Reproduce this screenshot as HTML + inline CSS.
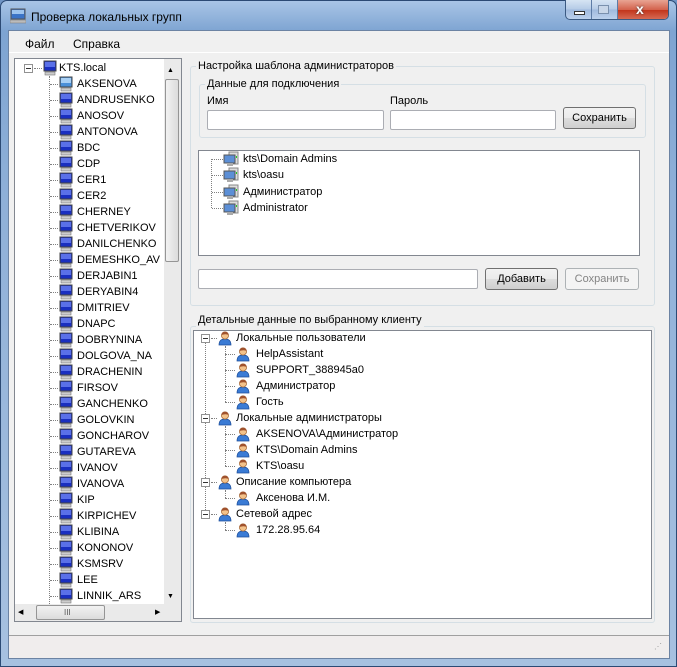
<!DOCTYPE html>
<html><head><meta charset="utf-8">
<style>
*{margin:0;padding:0;box-sizing:border-box}
body{width:677px;height:667px;overflow:hidden;font-family:"Liberation Sans",Arial,sans-serif;font-size:11px;color:#000;background:#6f94c4;position:relative}
.abs{position:absolute}
.frame{left:0;top:0;width:677px;height:667px;background:linear-gradient(180deg,#a9c5e6 0,#7ea4d2 30px,#8fb0d8 200px,#a7c1e0 667px);border:1px solid #2c4a74;border-radius:7px 7px 0 0}
.client{left:8px;top:30px;width:662px;height:629px;background:#f0f0f0;border:1px solid #6c83a3}
.t{position:absolute;white-space:nowrap;line-height:14px}
.box{position:absolute;border:1px solid #d5dfe5;border-radius:3px}
.white{position:absolute;background:#fff;border:1px solid #828790}
.inp{position:absolute;background:#fff;border:1px solid #abadb3;border-radius:2px}
.btn{position:absolute;border:1px solid #707070;border-radius:3px;background:linear-gradient(#f2f2f2,#ebebeb 50%,#dddddd 51%,#cfcfcf);text-align:center;line-height:20px}
.dis{border-color:#adb2b5;background:#f4f4f4;color:#838383}
.gt{position:absolute;background:#f0f0f0;padding:0 2px;line-height:13px;white-space:nowrap}
.dv{position:absolute;border-left:1px dotted #808080}
.dh{position:absolute;border-top:1px dotted #808080}
</style></head><body>
<div class="abs frame"></div>
<svg class="abs" style="left:10px;top:8px" width="16" height="16"><rect x="1" y="1" width="14" height="10" fill="#3a73c7" stroke="#555"/><rect x="2" y="2" width="12" height="4" fill="#9cc3ee"/><rect x="0" y="12" width="16" height="3" fill="#bbb" stroke="#777" stroke-width=".5"/></svg>
<div class="t" style="left:31px;top:10px;font-size:12px">Проверка локальных групп</div>
<div class="abs" style="left:565px;top:0;width:104px;height:20px;border:1px solid #3b5a82;border-top:none;border-radius:0 0 5px 5px;overflow:hidden;background:linear-gradient(#d6e4f3,#b4cae6 50%,#9fb9dd 51%,#bcd1ec)">
 <div class="abs" style="left:25px;top:0;width:1px;height:20px;background:#5d7ca6"></div>
 <div class="abs" style="left:51px;top:0;width:1px;height:20px;background:#5d7ca6"></div>
 <div class="abs" style="left:8px;top:11px;width:11px;height:4px;background:#fff;border:1px solid #333"></div>
 <div class="abs" style="left:32px;top:5px;width:11px;height:9px;border:1px solid #7a90ad;background:#c8d6e8"></div>
 <div class="abs" style="left:52px;top:0;width:52px;height:20px;background:linear-gradient(#e8a493,#d3604a 50%,#c2351c 51%,#d8705a)"></div>
 <div class="t" style="left:70px;top:2px;color:#fff;font-weight:bold;font-size:14px;text-shadow:0 0 2px #333">x</div>
</div>
<div class="abs client"></div>
<div class="abs" style="left:9px;top:31px;width:660px;height:22px;background:#f0f0f0;border-bottom:1px solid #fff"></div>
<div class="t" style="left:25px;top:37px;font-size:12px">Файл</div>
<div class="t" style="left:73px;top:37px;font-size:12px">Справка</div>

<div class="white" style="left:14px;top:58px;width:168px;height:564px"></div>
<div class="abs" style="left:164px;top:59px;width:17px;height:545px;background:#eaeaea"></div>
<div class="abs" style="left:165px;top:79px;width:14px;height:183px;border:1px solid #959595;border-radius:2px;background:linear-gradient(90deg,#f2f2f2,#dcdcdc)"></div>
<div class="t" style="left:167px;top:64px;font-size:7px">▲</div>
<div class="t" style="left:167px;top:590px;font-size:7px">▼</div>
<div class="abs" style="left:15px;top:604px;width:166px;height:17px;background:#eaeaea"></div>
<div class="abs" style="left:36px;top:605px;width:69px;height:15px;border:1px solid #959595;border-radius:2px;background:linear-gradient(#f2f2f2,#dcdcdc)"></div>
<div class="t" style="left:18px;top:606px;font-size:7px">◀</div>
<div class="t" style="left:155px;top:606px;font-size:7px">▶</div>
<div class="t" style="left:64px;top:606px;font-size:8px;color:#555">III</div>
<div id="lt"></div>

<div class="box" style="left:190px;top:66px;width:465px;height:240px"></div>
<div class="gt" style="left:196px;top:60px">Настройка шаблона администраторов</div>
<div class="box" style="left:199px;top:84px;width:447px;height:54px"></div>
<div class="gt" style="left:205px;top:78px">Данные для подключения</div>
<div class="t" style="left:207px;top:94px">Имя</div>
<div class="t" style="left:390px;top:94px">Пароль</div>
<div class="inp" style="left:207px;top:110px;width:177px;height:20px"></div>
<div class="inp" style="left:390px;top:110px;width:166px;height:20px"></div>
<div class="btn" style="left:563px;top:107px;width:73px;height:22px">Сохранить</div>
<div class="white" style="left:198px;top:150px;width:442px;height:106px"></div>
<div id="ad"></div>
<div class="inp" style="left:198px;top:269px;width:280px;height:20px"></div>
<div class="btn" style="left:485px;top:268px;width:73px;height:22px">Добавить</div>
<div class="btn dis" style="left:565px;top:268px;width:74px;height:22px">Сохранить</div>

<div class="box" style="left:190px;top:326px;width:465px;height:297px"></div>
<div class="gt" style="left:196px;top:314px">Детальные данные по выбранному клиенту</div>
<div class="white" style="left:193px;top:330px;width:459px;height:289px"></div>
<div id="dt"></div>

<div class="abs" style="left:9px;top:635px;width:660px;height:1px;background:#a0a0a0"></div>
<div class="abs" style="left:9px;top:636px;width:660px;height:22px;background:#f0eded"></div>
<div class="t" style="left:654px;top:640px;font-size:8px;color:#999;letter-spacing:-1px">⋰</div>

<script>
function comp(x,y,first){return '<svg class="abs" style="left:'+x+'px;top:'+y+'px" width="16" height="16"><rect x="2" y="1" width="12" height="10" fill="'+(first?'#4a90d9':'#1a2fc0')+'" stroke="#444"/><rect x="3" y="2" width="10" height="5" fill="'+(first?'#a8d0f5':'#5a70e8')+'"/><rect x="3" y="12" width="10" height="3" fill="#ccc" stroke="#777" stroke-width=".6"/></svg>';}
function srv(x,y){return '<svg class="abs" style="left:'+x+'px;top:'+y+'px" width="16" height="16"><rect x="6" y="1" width="9" height="12" fill="#ddd" stroke="#888"/><rect x="1" y="4" width="11" height="8" fill="#5c8fd6" stroke="#555"/><rect x="4" y="12" width="6" height="3" fill="#aaa"/><rect x="13" y="5" width="1" height="2" fill="#2c2"/></svg>';}
function usr(x,y){return '<svg class="abs" style="left:'+x+'px;top:'+y+'px" width="16" height="16"><path d="M2 15 Q2 9 8 9 Q14 9 14 15Z" fill="#3a7bd5" stroke="#1e4e9a" stroke-width=".7"/><circle cx="8" cy="5.5" r="3.6" fill="#f3c28a" stroke="#a0622e" stroke-width=".7"/><path d="M4.4 5 Q5 1.5 8 1.8 Q11 1.5 11.6 5 Q9 3.5 4.4 5Z" fill="#a0522d"/></svg>';}
function plus(x,y){return '<div class="abs" style="left:'+x+'px;top:'+y+'px;width:9px;height:9px;border:1px solid #919191;background:#fff"><div class="abs" style="left:1px;top:3px;width:5px;height:1px;background:#333"></div></div>';}
var h='';
var names=["AKSENOVA","ANDRUSENKO","ANOSOV","ANTONOVA","BDC","CDP","CER1","CER2","CHERNEY","CHETVERIKOV","DANILCHENKO","DEMESHKO_AV","DERJABIN1","DERYABIN4","DMITRIEV","DNAPC","DOBRYNINA","DOLGOVA_NA","DRACHENIN","FIRSOV","GANCHENKO","GOLOVKIN","GONCHAROV","GUTAREVA","IVANOV","IVANOVA","KIP","KIRPICHEV","KLIBINA","KONONOV","KSMSRV","LEE","LINNIK_ARS"];
h+=plus(24,64)+'<div class="dh" style="left:34px;top:68px;width:8px"></div>'+comp(42,60,false)+'<div class="t" style="left:59px;top:61px">KTS.local</div>';
h+='<div class="dv" style="left:49px;top:76px;height:528px"></div>';
names.forEach(function(n,i){var y=76+i*16;h+='<div class="dh" style="left:50px;top:'+(y+8)+'px;width:8px"></div>'+comp(58,y,i==0)+'<div class="t" style="left:77px;top:'+(y+1)+'px">'+n+'</div>';});
document.getElementById('lt').innerHTML=h;
h='';
var ad=["kts\\Domain Admins","kts\\oasu","Администратор","Administrator"];
h+='<div class="dv" style="left:211px;top:159px;height:49px"></div>';
ad.forEach(function(n,i){var y=151+i*16.3;h+='<div class="dh" style="left:212px;top:'+(y+8)+'px;width:11px"></div>'+srv(223,y)+'<div class="t" style="left:243px;top:'+(y+1)+'px">'+n+'</div>';});
document.getElementById('ad').innerHTML=h;
h='';
var tr=[[0,"Локальные пользователи"],[1,"HelpAssistant"],[1,"SUPPORT_388945a0"],[1,"Администратор"],[1,"Гость"],[0,"Локальные администраторы"],[1,"AKSENOVA\\Администратор"],[1,"KTS\\Domain Admins"],[1,"KTS\\oasu"],[0,"Описание компьютера"],[1,"Аксенова И.М."],[0,"Сетевой адрес"],[1,"172.28.95.64"]];
h+='<div class="dv" style="left:205px;top:343px;height:173px"></div>';
tr.forEach(function(e,i){var y=330+i*16;
 if(e[0]==0){h+=plus(201,y+4)+'<div class="dh" style="left:211px;top:'+(y+8)+'px;width:6px"></div>'+usr(217,y)+'<div class="t" style="left:236px;top:'+(y+1)+'px">'+e[1]+'</div>';}
 else{h+='<div class="dh" style="left:225px;top:'+(y+8)+'px;width:10px"></div>'+usr(235,y)+'<div class="t" style="left:256px;top:'+(y+1)+'px">'+e[1]+'</div>';}
});
[[346,402],[426,466],[490,498],[522,530]].forEach(function(r){h+='<div class="dv" style="left:225px;top:'+r[0]+'px;height:'+(r[1]-r[0])+'px"></div>';});
document.getElementById('dt').innerHTML=h;
</script>
</body></html>
